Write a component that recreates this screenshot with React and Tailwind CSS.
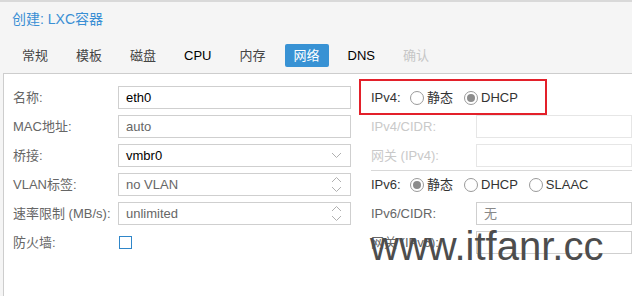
import React from 'react';

// --- Small drawings ---
const ChevronDown = () => (
  <svg width="11" height="7" viewBox="0 0 11 7" fill="none" stroke="#b0b0b0" strokeWidth="1"><polyline points="1,1 5.5,5.5 10,1" /></svg>
);
const Spinner = () => (
  <svg width="11" height="17" viewBox="0 0 11 17" fill="none" stroke="#b0b0b0" strokeWidth="1">
    <polyline points="1,6 5.5,1.5 10,6" />
    <polyline points="1,11 5.5,15.5 10,11" />
  </svg>
);

const Radio = ({ checked }) => (
  <span className="w-[14px] h-[14px] rounded-full border border-[#9a9a9a] bg-white flex items-center justify-center shrink-0">
    {checked && <span className="w-[8px] h-[8px] rounded-full bg-[#8c8c8c]" />}
  </span>
);

const RadioOpt = ({ checked, text, className = '' }) => (
  <span className={`flex items-center gap-[3px] ${className}`}>
    <Radio checked={checked} />
    <span className="text-[#333]">{text}</span>
  </span>
);

const Field = ({ value, muted, tail }) => (
  <div className="w-[233px] h-[23px] border border-[#cfcfcf] bg-white flex items-center pl-[7px] pr-[8px]">
    <span className={`flex-1 ${muted ? 'text-[#666]' : 'text-black'}`}>{value}</span>
    {tail}
  </div>
);

const LeftRow = ({ label, children }) => (
  <div className="flex items-center h-[23px]">
    <span className="w-[114px] pl-[9px] text-[#666]">{label}</span>
    {children}
  </div>
);

const RightRow = ({ label, disabled, children }) => (
  <div className="flex items-center h-[23px] pl-[12px]">
    <span className={`w-[105px] shrink-0 ${disabled ? 'text-[#c9c9c9]' : 'text-[#666]'}`}>{label}</span>
    {children}
  </div>
);

const tabs = ['常规', '模板', '磁盘', 'CPU', '内存', '网络', 'DNS', '确认'];

const App = () => (
  <div
    className="relative w-[632px] h-[296px] overflow-hidden bg-[#f5f5f5] flex flex-col text-[13px] leading-[16px]"
    style={{ fontFamily: '"Liberation Sans", "Noto Sans CJK SC", sans-serif' }}
  >
    <div className="h-[2px] bg-[#d9d9d9] shrink-0" />
    <div className="pl-[12px] pt-[9px] h-[25px] text-[14px] text-[#3a8fd4] shrink-0">创建: LXC容器</div>

    {/* tabs */}
    <div className="flex gap-[10px] ml-[13px] mt-[17px] shrink-0">
      {tabs.map(t => (
        <span
          key={t}
          className={`h-[23px] px-[9px] flex items-center rounded-[2px] ${
            t === '网络' ? 'bg-[#3892d4] text-white' : t === '确认' ? 'text-[#c6c6c6]' : t === 'CPU' || t === 'DNS' ? 'text-black' : 'text-[#444]'
          }`}
        >
          {t}
        </span>
      ))}
    </div>

    {/* body */}
    <div className="flex-1 mt-[6px] ml-[3px] border-l border-t border-[#cdcdcd] bg-white flex pt-[12px]">
      <div className="w-[355px] shrink-0 flex flex-col gap-[6px]">
        <LeftRow label="名称:"><Field value="eth0" /></LeftRow>
        <LeftRow label="MAC地址:"><Field value="auto" muted /></LeftRow>
        <LeftRow label="桥接:"><Field value="vmbr0" tail={<ChevronDown />} /></LeftRow>
        <LeftRow label="VLAN标签:"><Field value="no VLAN" muted tail={<Spinner />} /></LeftRow>
        <LeftRow label="速率限制 (MB/s):"><Field value="unlimited" muted tail={<Spinner />} /></LeftRow>
        <LeftRow label="防火墙:">
          <span className="ml-[1px] w-[13px] h-[13px] border-[1.5px] border-[#2f86c9] bg-white" />
        </LeftRow>
      </div>

      <div className="flex-1 overflow-hidden flex flex-col">
        <div className="flex flex-col gap-[6px]">
          <div className="flex items-center h-[23px] pl-[12px] text-[#333]">
            <span className="w-[39px]">IPv4:</span>
            <RadioOpt text="静态" />
            <RadioOpt checked text="DHCP" className="ml-[11px]" />
          </div>
          <RightRow label="IPv4/CIDR:" disabled>
            <div className="w-[200px] h-[23px] border border-[#e6e6e6] bg-white" />
          </RightRow>
          <RightRow label="网关 (IPv4):" disabled>
            <div className="w-[200px] h-[23px] border border-[#e6e6e6] bg-white" />
          </RightRow>
        </div>
        <div className="mt-[3px] ml-[12px] border-t border-[#d8d8d8]" />
        <div className="mt-[2px] flex flex-col gap-[6px]">
          <div className="flex items-center h-[23px] pl-[12px] text-[#333]">
            <span className="w-[39px]">IPv6:</span>
            <RadioOpt checked text="静态" />
            <RadioOpt text="DHCP" className="ml-[11px]" />
            <RadioOpt text="SLAAC" className="ml-[11px]" />
          </div>
          <RightRow label="IPv6/CIDR:">
            <div className="w-[200px] h-[23px] border border-[#cfcfcf] bg-white flex items-center pl-[7px] text-[#888]">无</div>
          </RightRow>
          <RightRow label="网关 (IPv6):">
            <div className="w-[200px] h-[23px] border border-[#cfcfcf] bg-white" />
          </RightRow>
        </div>
      </div>
    </div>

    {/* annotation box */}
    <div className="absolute left-[359px] top-[79px] w-[188px] h-[36px] border-2 border-[#e3202a]" />

    {/* watermark */}
    <div className="absolute left-[370px] top-[226px] text-[40px] leading-[40px] text-[#4d4d4d]">www.itfanr.cc</div>
  </div>
);

export default App;
